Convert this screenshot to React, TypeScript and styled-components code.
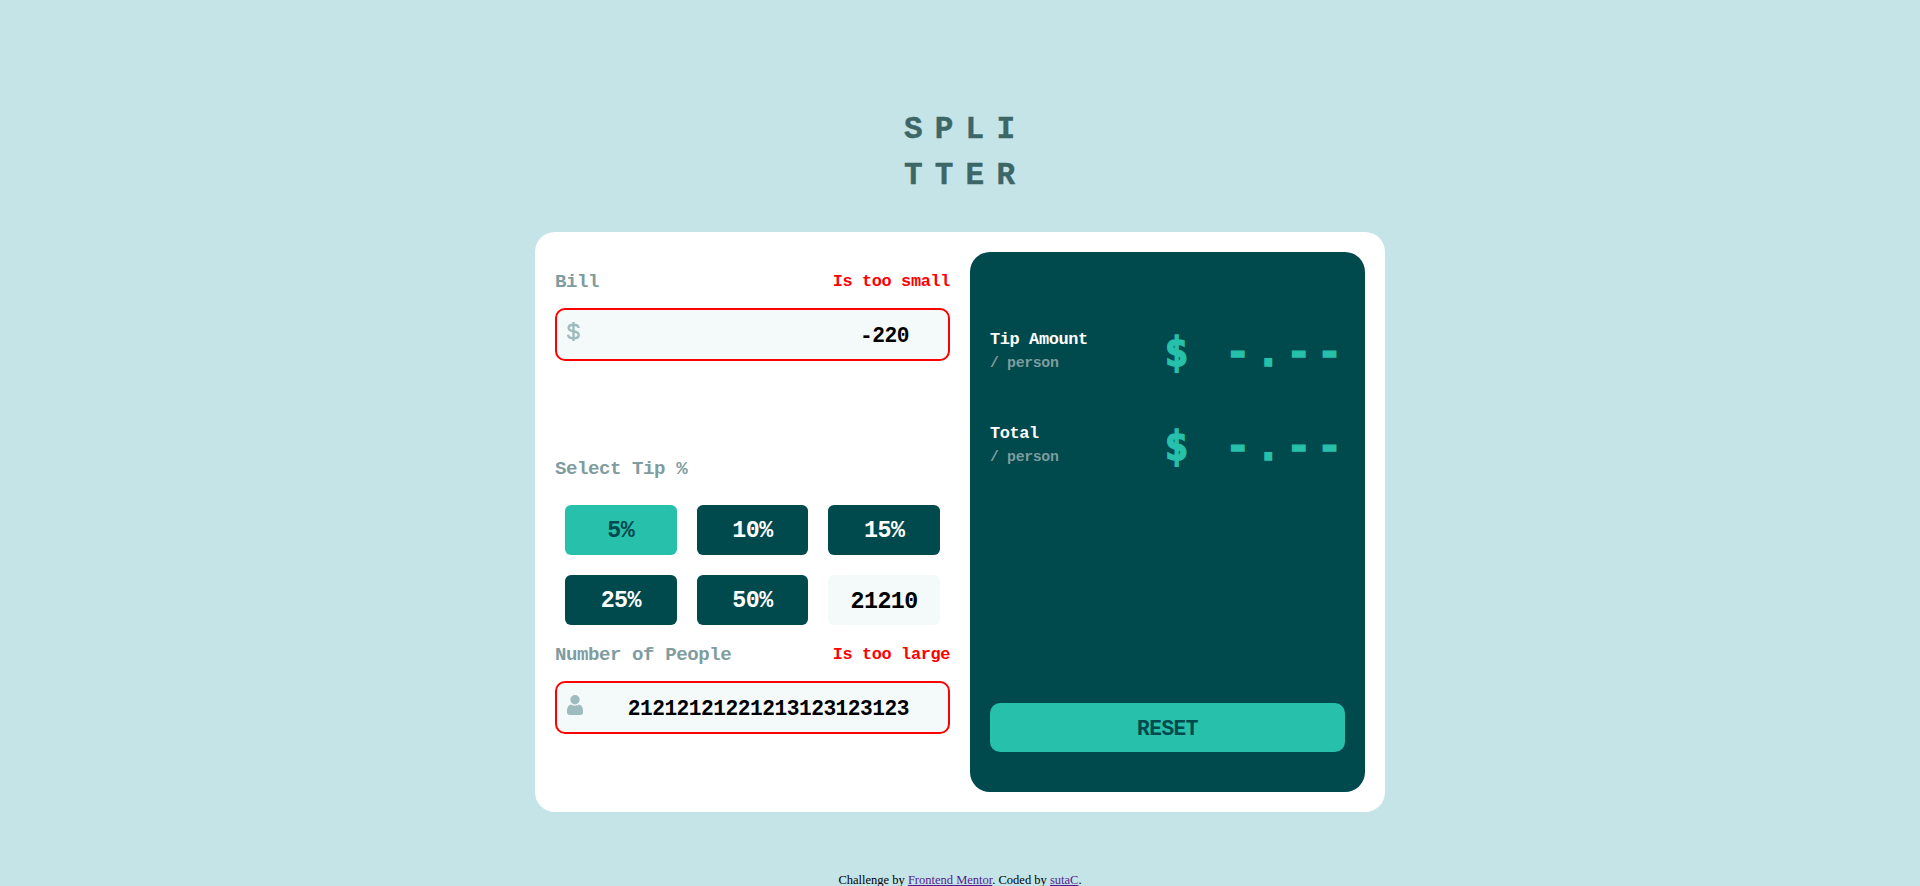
import React, { useState } from "react";
import styled, { createGlobalStyle, css } from "styled-components";

const colors = {
  page: "#c5e4e7",
  dark: "#00494d",
  green: "#26c0ab",
  label: "#7f9c9f",
  icon: "#9ebbbd",
  field: "#f4fafa",
  title: "#3d6666",
  error: "#ff0000",
};

/* Monospaced bold type on a 0.612em pitch */
const mono = (size: number, line: number) => css`
  font-family: "Liberation Mono", monospace;
  font-weight: 700;
  font-size: ${size * 1.06}px;
  letter-spacing: ${size * -0.0242}px;
  line-height: ${line}px;
`;

const GlobalStyle = createGlobalStyle`
  * { box-sizing: border-box; }
  html, body { margin: 0; height: 100%; overflow: hidden; background: ${colors.page}; }
`;

const Page = styled.div`
  height: 886px;
  overflow: hidden;
  display: flex;
  flex-direction: column;
  align-items: center;
  background: ${colors.page};
`;

const Title = styled.h1`
  flex: none;
  margin: 107px 0 0 9px;
  height: 125px;
  width: 125px;
  padding-left: 2px;
  font: 700 31px/45.6px "Liberation Mono", monospace;
  letter-spacing: 12.2px;
  color: ${colors.title};
  -webkit-text-stroke: 0.4px ${colors.title};
`;

const Card = styled.main`
  flex: none;
  width: 850px;
  height: 580px;
  padding: 20px;
  display: grid;
  grid-template-columns: 395px 395px;
  gap: 20px;
  border-radius: 20px;
  background: #fff;
`;

const Form = styled.section`
  display: flex;
  flex-direction: column;
`;

const Group = styled.div<{ $height: number }>`
  height: ${(p) => p.$height}px;
  padding-top: 17px;
`;

const LabelRow = styled.div`
  display: flex;
  justify-content: space-between;
  height: 27px;
`;

const Label = styled.label`
  ${mono(18, 27)}
  color: ${colors.label};
`;

const ErrorText = styled.span`
  ${mono(16, 26)}
  color: ${colors.error};
`;

const Field = styled.div`
  display: flex;
  margin-top: 12px;
  height: 53px;
  padding: 0 39px 0 10px;
  border: 2px solid ${colors.error};
  border-radius: 10px;
  background: ${colors.field};

  svg {
    flex: none;
    margin-top: 12px;
  }
`;

const Input = styled.input`
  ${mono(20, 46)}
  flex: 1;
  min-width: 0;
  height: 49px;
  padding: 3px 0 0;
  border: 0;
  outline: 0;
  background: transparent;
  color: #000;
  text-align: right;
`;

const TipGrid = styled.div`
  display: grid;
  grid-template-columns: repeat(3, 1fr);
  gap: 20px;
  margin: 22px 10px 0;
`;

const tile = css`
  ${mono(22, 47)}
  width: 100%;
  min-width: 0;
  height: 50px;
  padding: 3px 0 0;
  border: 0;
  border-radius: 6px;
  text-align: center;
`;

const TipButton = styled.button<{ $active: boolean }>`
  ${tile}
  background: ${(p) => (p.$active ? colors.green : colors.dark)};
  color: ${(p) => (p.$active ? colors.dark : "#fff")};
  cursor: pointer;
`;

const CustomTip = styled.input`
  ${tile}
  outline: 0;
  background: ${colors.field};
  color: #000;
`;

const Results = styled.section`
  display: flex;
  flex-direction: column;
  padding: 75px 20px 40px;
  border-radius: 20px;
  background: ${colors.dark};
`;

const ResultRow = styled.div`
  display: flex;
  justify-content: space-between;
  height: 94px;
`;

const ResultName = styled.div`
  ${mono(16, 26)}
  color: #fff;
`;

const PerPerson = styled.div`
  ${mono(14, 20)}
  color: ${colors.label};
`;

const Amount = styled.div`
  font: 700 40px/50px "DejaVu Sans Mono", monospace;
  letter-spacing: 6.5px;
  margin: 0 -3px 0 0;
  white-space: pre;
  color: ${colors.green};
  -webkit-text-stroke: 1.4px ${colors.green};
`;

const ResetButton = styled.button`
  ${mono(20, 46)}
  margin-top: auto;
  height: 49px;
  padding: 3px 0 0;
  border: 0;
  border-radius: 10px;
  background: ${colors.green};
  color: ${colors.dark};
  cursor: pointer;
`;

const Footer = styled.footer`
  flex: none;
  margin-top: 60px;
  font: 12.5px/16px "Liberation Serif", serif;
  color: #000;

  a {
    color: #551a8b;
  }
`;

const DollarIcon = () => (
  <svg width="13" height="19" viewBox="0 0 13 19" fill="none" stroke={colors.icon} strokeWidth="2.4">
    <path d="M6.5 0v19M11.6 6C11.4 3.7 9.5 2.7 6.5 2.7S1.6 3.9 1.6 5.9c0 2.2 2 2.8 4.9 3.4s5.2 1.3 5.2 3.7c0 2.1-2.1 3.3-5.2 3.3S1.3 15 1.1 12.6" />
  </svg>
);

const PersonIcon = () => (
  <svg width="16" height="20" viewBox="0 0 16 20" fill={colors.icon}>
    <circle cx="8" cy="4.8" r="4.7" />
    <path d="M4.2 9.6c2 1.6 5.600 1.600 7.600 0 2.700.5 4.200 2.900 4.200 5.900v1.700c0 1.700-1.100 2.800-2.800 2.800H2.800C1.100 20 0 18.900 0 17.200v-1.700c0-3 1.500-5.400 4.200-5.900z" />
  </svg>
);

const tips = [5, 10, 15, 25, 50];

const results = ["Tip Amount", "Total"];

export default function App() {
  const [tip, setTip] = useState(5);

  return (
    <Page>
      <GlobalStyle />
      <Title>
        SPLI
        <br />
        TTER
      </Title>
      <Card>
        <Form>
          <Group $height={187}>
            <LabelRow>
              <Label htmlFor="bill">Bill</Label>
              <ErrorText>Is too small</ErrorText>
            </LabelRow>
            <Field>
              <DollarIcon />
              <Input id="bill" defaultValue="-220" />
            </Field>
          </Group>
          <Group $height={186}>
            <LabelRow>
              <Label as="span">Select Tip %</Label>
            </LabelRow>
            <TipGrid>
              {tips.map((value) => (
                <TipButton key={value} $active={value === tip} onClick={() => setTip(value)}>
                  {value}%
                </TipButton>
              ))}
              <CustomTip aria-label="Custom tip" defaultValue="21210" />
            </TipGrid>
          </Group>
          <Group $height={167}>
            <LabelRow>
              <Label htmlFor="people">Number of People</Label>
              <ErrorText>Is too large</ErrorText>
            </LabelRow>
            <Field>
              <PersonIcon />
              <Input id="people" defaultValue="21212121221213123123123" />
            </Field>
          </Group>
        </Form>
        <Results>
          {results.map((name) => (
            <ResultRow key={name}>
              <div>
                <ResultName>{name}</ResultName>
                <PerPerson>/ person</PerPerson>
              </div>
              <Amount>$ -.--</Amount>
            </ResultRow>
          ))}
          <ResetButton>RESET</ResetButton>
        </Results>
      </Card>
      <Footer>
        Challenge by <a href="#mentor">Frontend Mentor</a>. Coded by <a href="#author">sutaC</a>.
      </Footer>
    </Page>
  );
}
